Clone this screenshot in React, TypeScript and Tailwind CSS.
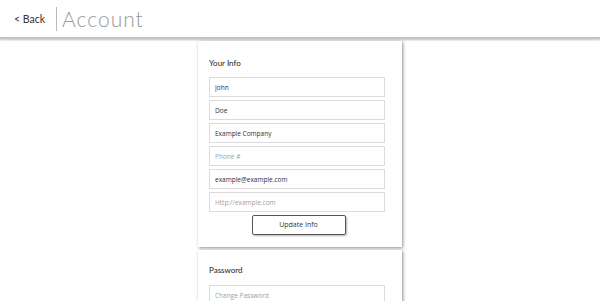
export default function App() {
  const fields = [
    { value: "John", placeholder: "First Name" },
    { value: "Doe", placeholder: "Last Name" },
    { value: "Example Company", placeholder: "Company" },
    { value: "", placeholder: "Phone #" },
    { value: "example@example.com", placeholder: "Email" },
    { value: "", placeholder: "Http://example.com" },
  ];

  return (
    <div className="w-[600px] h-[301px] overflow-hidden bg-white font-['Lato',sans-serif] text-[#222]">
      <header className="h-[39px] flex items-center border-b-2 border-[#c4c4c4] shadow-[0_1px_2px_rgba(0,0,0,0.25)]">
        <a className="ml-[14px] mt-[2px] text-[10.5px] text-[#333]">&lt; Back</a>
        <div className="ml-[11px] h-[24px] w-px bg-[#b8b8b8]" />
        <h1 className="ml-[5px] text-[21px] font-light tracking-[1px] text-[#9a9a9a]">Account</h1>
      </header>

      <main className="flex flex-col items-center pt-[2px] gap-[3px]">
        <section className="w-[204px] bg-white px-[11px] pt-[16px] pb-[12px] shadow-[1px_1px_3px_rgba(0,0,0,0.45)]">
          <h2 className="text-[8px] leading-[12px] mb-[8px]">Your Info</h2>
          <div className="flex flex-col gap-[3px]">
            {fields.map((f) => (
              <input
                key={f.placeholder}
                defaultValue={f.value}
                placeholder={f.placeholder}
                className="block w-[176px] h-[20px] border border-[#dcdcdc] px-[5px] font-['Open_Sans',sans-serif] text-[6.5px] text-[#2a3046] placeholder:text-[#a0a0a0] outline-none"
              />
            ))}
          </div>
          <div className="flex justify-center mt-[3px] pr-[3px]">
            <button className="w-[94px] h-[20px] border-[1.5px] border-[#555] rounded-[2px] font-['Open_Sans',sans-serif] text-[7px] text-[#333] shadow-[1px_1px_2px_rgba(0,0,0,0.3)]">
              Update Info
            </button>
          </div>
        </section>

        <section className="w-[204px] bg-white px-[11px] pt-[14px] pb-[12px] shadow-[1px_1px_3px_rgba(0,0,0,0.45)]">
          <h2 className="text-[8px] leading-[12px] mb-[9px]">Password</h2>
          <input
            type="password"
            placeholder="Change Password"
            className="block w-[176px] h-[20px] border border-[#dcdcdc] px-[5px] font-['Open_Sans',sans-serif] text-[6.5px] placeholder:text-[#a0a0a0] outline-none"
          />
        </section>
      </main>
    </div>
  );
}
